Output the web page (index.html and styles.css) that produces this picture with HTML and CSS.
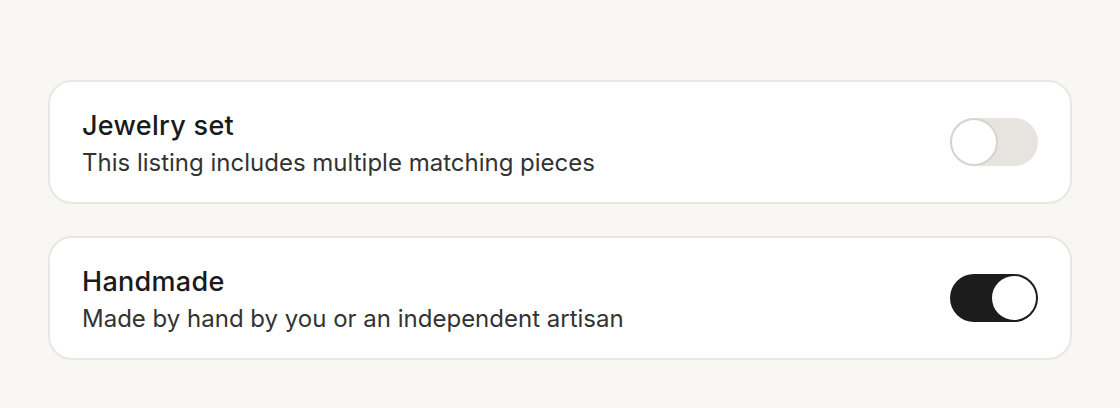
FILE: index.html
```html
<!DOCTYPE html>
<html lang="en">
    <head>
        <meta charset="UTF-8" />
        <meta name="viewport" content="width=device-width, initial-scale=1.0" />
        <title>Listing options</title>
        <link rel="stylesheet" href="styles.css">
    </head>
    <body>
        <main class="options">
            <label class="option">
                <div class="option-text">
                    <span class="option-title">Jewelry set</span>
                    <span class="option-desc">This listing includes multiple matching pieces</span>
                </div>
                <input type="checkbox" class="switch" />
            </label>

            <label class="option">
                <div class="option-text">
                    <span class="option-title">Handmade</span>
                    <span class="option-desc">Made by hand by you or an independent artisan</span>
                </div>
                <input type="checkbox" class="switch" checked />
            </label>
        </main>
    </body>
</html>
```

FILE: styles.css
```css
*,
*::before,
*::after {
    padding: 0;
    margin: 0;
    box-sizing: border-box;
}

body {
    background: #f8f7f3;
    font-family: Inter, "Noto Sans", sans-serif;
    color: #1c1c1c;
}

main.options {
    display: flex;
    flex-direction: column;
    gap: 32px;
    padding: 80px 48px 40px;
}

label.option {
    display: flex;
    align-items: center;
    justify-content: space-between;
    gap: 24px;
    background: #fff;
    border: 2px solid #e9e7e2;
    border-radius: 24px;
    padding: 26px 32px;

    & div.option-text {
        display: flex;
        flex-direction: column;
        gap: 7px;
        padding-top: 2px;
    }

    & span.option-title {
        font-size: 27px;
        font-weight: 500;
        line-height: 32px;
        letter-spacing: 0.3px;
        color: #1a1a1a;
    }

    & span.option-desc {
        font-size: 24px;
        line-height: 27px;
        color: #333;
    }
}

input.switch {
    appearance: none;
    -webkit-appearance: none;
    position: relative;
    flex-shrink: 0;
    width: 88px;
    height: 48px;
    border-radius: 100px;
    background: #e7e4df;
    cursor: pointer;
    transition: background 0.2s;

    &::before {
        content: "";
        position: absolute;
        top: 2px;
        left: 2px;
        width: 44px;
        height: 44px;
        border-radius: 50%;
        background: #fff;
        box-shadow: 0 0 0 2px #d6d4d0;
        transition: left 0.2s;
    }

    &:checked {
        background: #1c1c1c;

        &::before {
            left: 42px;
            box-shadow: none;
        }
    }
}
```
